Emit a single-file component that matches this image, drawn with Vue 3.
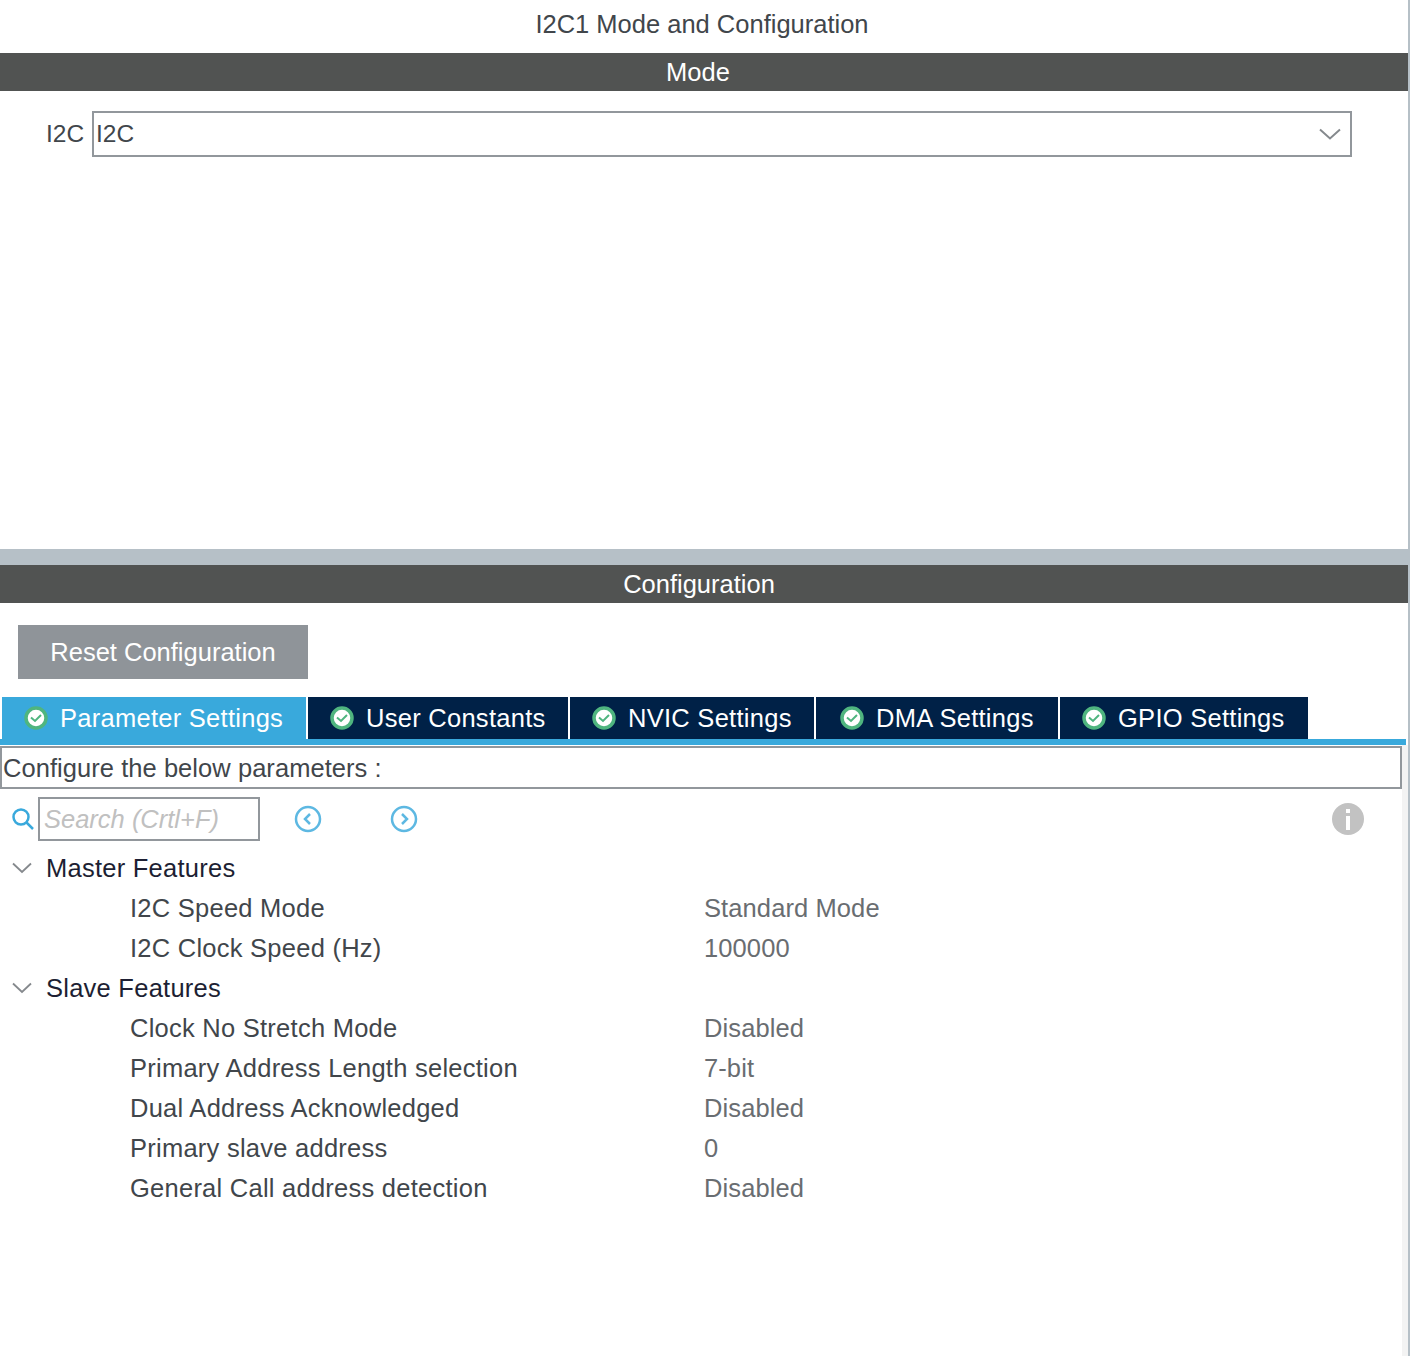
<template>
  <div class="page">
    <div class="title">I2C1 Mode and Configuration</div>
    <div class="bar bar-mode">Mode</div>
    <div class="mode-panel">
      <label class="mode-label">I2C</label>
      <div class="select">
        <span>I2C</span>
        <svg class="select-arrow" width="22" height="12" viewBox="0 0 22 12">
          <path d="M1 1.5 L11 10.5 L21 1.5" fill="none" stroke="#85898d" stroke-width="2" />
        </svg>
      </div>
    </div>
    <div class="splitter"></div>
    <div class="bar">Configuration</div>
    <div class="config">
      <div class="reset-wrap">
        <button class="reset">Reset Configuration</button>
      </div>
      <div class="tabs">
        <div
          v-for="(tab, i) in tabs"
          :key="tab.name"
          class="tab"
          :class="{ active: i === 0 }"
          :style="{ width: tab.width + 'px', paddingLeft: tab.pad + 'px' }"
        >
          <svg class="check" width="24" height="24" viewBox="0 0 24 24">
            <circle cx="12" cy="12" r="10" fill="#fff" stroke="#4fb57f" stroke-width="3.5" />
            <path d="M7 11.5 L11 15 L17 9" fill="none" stroke="#4fb57f" stroke-width="2" />
          </svg>
          <span>{{ tab.name }}</span>
        </div>
      </div>
      <div class="tab-line"></div>
      <div class="tab-body">
        <div class="params">
          <div class="hint">Configure the below parameters :</div>
          <div class="search-row">
            <svg class="search-icon" width="24" height="26" viewBox="0 0 24 26">
              <circle cx="10" cy="11" r="7.5" fill="none" stroke="#39a9dc" stroke-width="2.5" />
              <path d="M15.5 16.5 L22 23" stroke="#39a9dc" stroke-width="2.5" />
            </svg>
            <div class="search">Search (Crtl+F)</div>
            <svg class="nav nav-prev" width="28" height="28" viewBox="0 0 28 28">
              <circle cx="14" cy="14" r="12" fill="none" stroke="#5db8e2" stroke-width="2.5" />
              <path d="M16 9 L11 14 L16 19" fill="none" stroke="#5db8e2" stroke-width="2.5" />
            </svg>
            <svg class="nav nav-next" width="28" height="28" viewBox="0 0 28 28">
              <circle cx="14" cy="14" r="12" fill="none" stroke="#5db8e2" stroke-width="2.5" />
              <path d="M12 9 L17 14 L12 19" fill="none" stroke="#5db8e2" stroke-width="2.5" />
            </svg>
            <svg class="info" width="32" height="32" viewBox="0 0 32 32">
              <circle cx="16" cy="16" r="16" fill="#c2c2c2" />
              <rect x="14" y="13" width="4" height="14" fill="#fff" />
              <rect x="14" y="6" width="4" height="4" fill="#fff" />
            </svg>
          </div>
          <div class="tree">
            <template v-for="group in groups" :key="group.name">
              <div class="row group">
                <svg class="twisty" width="20" height="12" viewBox="0 0 20 12">
                  <path d="M1 1.5 L10 10 L19 1.5" fill="none" stroke="#85898d" stroke-width="1.8" />
                </svg>
                <span>{{ group.name }}</span>
              </div>
              <div v-for="item in group.items" :key="item[0]" class="row item">
                <span class="name">{{ item[0] }}</span>
                <span class="value">{{ item[1] }}</span>
              </div>
            </template>
          </div>
        </div>
      </div>
    </div>
  </div>
</template>

<script setup>
const tabs = [
  { name: 'Parameter Settings', width: 304, pad: 22 },
  { name: 'User Constants', width: 260, pad: 22 },
  { name: 'NVIC Settings', width: 244, pad: 22 },
  { name: 'DMA Settings', width: 242, pad: 24 },
  { name: 'GPIO Settings', width: 248, pad: 22 }
]

const groups = [
  {
    name: 'Master Features',
    items: [
      ['I2C Speed Mode', 'Standard Mode'],
      ['I2C Clock Speed (Hz)', '100000']
    ]
  },
  {
    name: 'Slave Features',
    items: [
      ['Clock No Stretch Mode', 'Disabled'],
      ['Primary Address Length selection', '7-bit'],
      ['Dual Address Acknowledged', 'Disabled'],
      ['Primary slave address', '0'],
      ['General Call address detection', 'Disabled']
    ]
  }
]
</script>

<style scoped>
.page {
  width: 1408px;
  height: 1356px;
  border-right: 2px solid #b6c0c7;
  background: #fff;
  display: flex;
  flex-direction: column;
  font-family: "Liberation Sans", Arial, sans-serif;
  font-size: 25.5px;
  color: #41464b;
  overflow: hidden;
}
.title {
  height: 53px;
  line-height: 48px;
  text-align: center;
  padding-right: 4px;
}
.bar {
  height: 38px;
  line-height: 38px;
  flex-shrink: 0;
  background: #515352;
  color: #fff;
  text-align: center;
  padding-right: 10px;
}
.bar-mode {
  padding-right: 12px;
}
.mode-panel {
  height: 458px;
  padding: 20px 0 0 46px;
  box-sizing: border-box;
  display: flex;
  align-items: flex-start;
  font-size: 24.5px;
}
.mode-label {
  width: 46px;
  line-height: 46px;
}
.select {
  width: 1260px;
  height: 46px;
  box-sizing: border-box;
  border: 2px solid #92979c;
  padding-left: 2px;
  line-height: 42px;
  display: flex;
  justify-content: space-between;
  align-items: center;
}
.select-arrow {
  margin-right: 9px;
}
.splitter {
  height: 16px;
  background: #b6c0c7;
}
.config {
  flex: 1;
  display: flex;
  flex-direction: column;
}
.reset-wrap {
  padding: 22px 0 18px 18px;
}
.reset {
  display: block;
  width: 290px;
  height: 54px;
  border: none;
  padding: 0;
  background: #8f9499;
  color: #fff;
  font: inherit;
}
.tabs {
  display: flex;
  gap: 2px;
  padding-left: 2px;
  height: 42px;
}
.tab {
  background: #002147;
  color: #fff;
  display: flex;
  align-items: center;
  gap: 12px;
  box-sizing: border-box;
  letter-spacing: 0.27px;
  white-space: nowrap;
}
.tab.active {
  background: #39a9dc;
}
.check {
  flex-shrink: 0;
}
.tab-line {
  height: 6px;
  width: 1406px;
  background: #39a9dc;
}
.tab-body {
  flex: 1;
  background: linear-gradient(to right, #fff 1402px, #f3f3f3 1402px);
}
.params {
  width: 1402px;
  padding-top: 1px;
}
.hint {
  height: 43px;
  box-sizing: border-box;
  border: 2px solid #92979c;
  line-height: 40px;
  padding-left: 1px;
  letter-spacing: 0.05px;
}
.search-row {
  height: 59px;
  display: flex;
  align-items: flex-start;
  padding: 8px 0 0 11px;
  box-sizing: border-box;
  position: relative;
}
.search-icon {
  margin-top: 9px;
  margin-right: 3px;
}
.search {
  width: 222px;
  height: 44px;
  box-sizing: border-box;
  border: 2px solid #92979c;
  color: #c0c0c0;
  font-style: italic;
  line-height: 41px;
  padding-left: 4px;
}
.nav {
  margin-top: 8px;
}
.nav-prev {
  margin-left: 34px;
}
.nav-next {
  margin-left: 68px;
}
.info {
  margin-top: 6px;
  margin-left: auto;
  margin-right: 38px;
}
.row {
  height: 40px;
  line-height: 40px;
  display: flex;
  align-items: center;
  letter-spacing: 0.25px;
}
.group {
  color: #1d1f33;
  padding-left: 12px;
}
.twisty {
  margin-right: 14px;
}
.item .name {
  width: 574px;
  margin-left: 130px;
  flex-shrink: 0;
}
.item .value {
  color: #696d71;
  letter-spacing: 0.1px;
}
</style>

<style>
html, body {
  margin: 0;
  background: #fff;
}
</style>
